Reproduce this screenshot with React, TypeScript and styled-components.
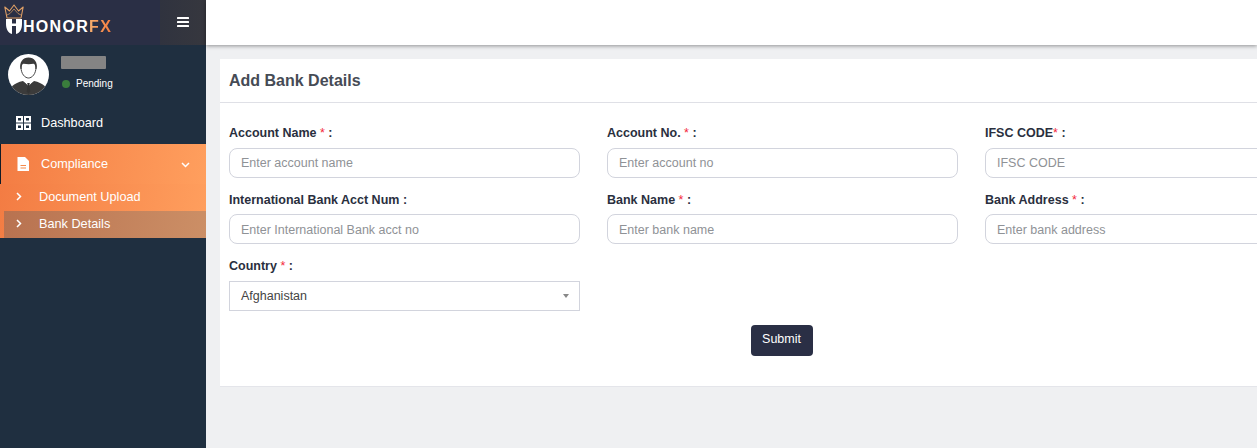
import React from "react";
import styled, { createGlobalStyle } from "styled-components";

const GlobalStyle = createGlobalStyle`
    html, body {
        margin: 0;
        padding: 0;
        height: 448px;
        overflow: hidden;
        background: #eff0f2;
        font-family: "Liberation Sans", Arial, sans-serif;
    }
`

const Shell = styled.div`
    display: flex;
    width: 1257px;
    height: 448px;
    overflow: hidden;
`

const Sidebar = styled.aside`
    width: 206px;
    flex-shrink: 0;
    background: #1f2f40;
    display: flex;
    flex-direction: column;
    color: #fff;
`

const Brand = styled.div`
    height: 45px;
    display: flex;
`

const LogoArea = styled.div`
    width: 160px;
    background: #2a2f45;
    display: flex;
    align-items: flex-start;
    padding-left: 4px;
    box-sizing: border-box;
`

const LogoMark = styled.svg`
    width: 20px;
    height: 32px;
    margin-top: 4px;
    flex-shrink: 0;
`

const ToggleArea = styled.div`
    width: 46px;
    background: linear-gradient(90deg, #30333f 0%, #36373e 100%);
    display: flex;
    align-items: center;
    justify-content: center;
    padding-bottom: 2px;
    box-sizing: border-box;
`

const LogoText = styled.span`
    margin: 16px 0 0 -1px;
    font-size: 16px;
    line-height: 22px;
    font-weight: 700;
    letter-spacing: 1.3px;
    color: #fff;
`

const LogoAccent = styled.span`
    background: linear-gradient(90deg, #f7b070 0%, #f57a3c 100%);
    -webkit-background-clip: text;
    background-clip: text;
    color: transparent;
`

const UserBlock = styled.div`
    height: 57px;
    display: flex;
    padding: 9px 0 0 8px;
    box-sizing: border-box;
`

const AvatarImage = styled.svg`
    width: 41px;
    height: 41px;
    flex-shrink: 0;
`

const UserInfo = styled.div`
    margin-left: 12px;
    padding-top: 2px;
    display: flex;
    flex-direction: column;
`

const NameMask = styled.div`
    width: 45px;
    height: 13px;
    background: #848484;
    border-radius: 1px;
`

const Status = styled.div`
    display: flex;
    align-items: center;
    margin-top: 8px;
    margin-left: 1px;
    font-size: 10px;
    line-height: 14px;
`

const StatusDot = styled.span`
    width: 8px;
    height: 8px;
    border-radius: 50%;
    background: #3a7d3c;
    margin-right: 6px;
`

const NavItem = styled.div`
    height: 42px;
    display: flex;
    align-items: center;
    padding-left: 16px;
    box-sizing: border-box;
    font-size: 12.7px;
`

const NavIcon = styled.svg`
    width: 16px;
    height: 16px;
    margin-right: 9px;
    flex-shrink: 0;
`

const ActiveGroup = styled.div`
    display: flex;
    flex-direction: column;
`

const ActiveItem = styled.div`
    height: 40px;
    display: flex;
    align-items: center;
    padding: 0 16px 0 15px;
    font-size: 12.7px;
    background: linear-gradient(100deg, #f37c43 0%, #ff9f5e 100%);
    border-left: 1px solid #111b26;
    box-sizing: border-box;
`

const Chevron = styled.svg`
    width: 9px;
    height: 9px;
    margin-left: auto;
`

const SubList = styled.div`
    background: linear-gradient(100deg, #f37c43 0%, #ff9f5e 100%);
    display: flex;
    flex-direction: column;
`

const SubItem = styled.div<{ $active?: boolean }>`
    height: 27px;
    box-sizing: border-box;
    display: flex;
    align-items: center;
    font-size: 12.7px;
    padding-bottom: 2px;
    padding-left: ${props => props.$active ? "11px" : "15px"};
    margin-left: ${props => props.$active ? "4px" : "0"};
    background: ${props => props.$active ? "linear-gradient(100deg, #b87250 0%, #cc8f66 100%)" : "transparent"};
`

const SubArrow = styled.svg`
    width: 8px;
    height: 9px;
    margin-right: 16px;
`

const Main = styled.main`
    flex: 1;
    min-width: 0;
    display: flex;
    flex-direction: column;
`

const TopBar = styled.header`
    height: 45px;
    flex-shrink: 0;
    background: #fff;
    box-shadow: 0 1px 4px rgba(0,0,0,.4);
`

const Card = styled.section`
    margin: 14px 0 0 14px;
    width: 1200px;
    height: 328px;
    flex-shrink: 0;
    background: #fff;
    border-bottom: 1px solid #e4e5ea;
    box-sizing: border-box;
`

const CardTitle = styled.h3`
    margin: 0;
    height: 43px;
    padding-left: 9px;
    display: flex;
    align-items: center;
    font-size: 16px;
    font-weight: 700;
    color: #464b55;
    border-bottom: 1px solid #dfe0e6;
`

const Form = styled.form`
    padding: 22px 9px 0;
    display: grid;
    grid-template-columns: repeat(3, 351px);
    column-gap: 27px;
`

const Field = styled.div`
    height: 66.5px;
    display: flex;
    flex-direction: column;
`

const Label = styled.label`
    font-size: 12.5px;
    line-height: 16px;
    font-weight: 700;
    color: #2a2f3e;
    margin-bottom: 6.9px;
`

const Star = styled.span`
    color: #f4283c;
    font-weight: 400;
`

const Input = styled.input`
    height: 30px;
    box-sizing: border-box;
    border: 1px solid #d2d4dd;
    border-radius: 8px;
    padding: .4px 11px 0;
    font: 12.5px "Liberation Sans", Arial, sans-serif;
    color: #333;
    outline: none;
    background: #fff;

    &::placeholder {
        color: #8f9296;
        opacity: 1;
    }
`

const SelectBox = styled.div`
    height: 30px;
    box-sizing: border-box;
    border: 1px solid #d2d4dd;
    padding: 0 11px;
    display: flex;
    align-items: center;
    font-size: 12.5px;
    color: #444;
`

const Caret = styled.span`
    margin-left: auto;
    margin-right: -1px;
    border-left: 3px solid transparent;
    border-right: 3px solid transparent;
    border-top: 4px solid #888;
`

const Actions = styled.div`
    display: flex;
    width: 1105px;
    justify-content: center;
    margin-left: 9px;
`

const SubmitButton = styled.button`
    width: 62px;
    height: 31px;
    border: none;
    border-radius: 4px;
    background: #2a2f45;
    color: #fff;
    font: 12.5px "Liberation Sans", Arial, sans-serif;
    padding: 0 0 3px;
`

const fields = [
    { label: "Account Name", star: " * ", placeholder: "Enter account name" },
    { label: "Account No.", star: " * ", placeholder: "Enter account no" },
    { label: "IFSC CODE", star: "* ", placeholder: "IFSC CODE" },
    { label: "International Bank Acct Num", star: " ", placeholder: "Enter International Bank acct no", plain: true },
    { label: "Bank Name", star: " * ", placeholder: "Enter bank name" },
    { label: "Bank Address", star: " * ", placeholder: "Enter bank address" },
]

const Logo = () => (
    <LogoMark viewBox="0 0 20 32">
        <path d="M3 14L.8 3l4.700 4L10 1l4.500 6 4.700-4L17 14z" fill="none" stroke="#e0a066" strokeWidth="1.1" strokeLinejoin="round" />
        <path d="M3 11l3-1.500L10 5l4 4.500 3 1.500" fill="none" stroke="#e0a066" strokeWidth=".7" />
        <path d="M2 15h6v15C4 29 2 25 2 20zM18 15h-6v15c4-1 6-5 6-10z" fill="#fff" />
        <path d="M8 19.500h4v2.500H8z" fill="#fff" />
    </LogoMark>
)

const Avatar = () => (
    <AvatarImage viewBox="0 0 41 41">
        <clipPath id="avatarClip"><circle cx="20.5" cy="20.5" r="20.5" /></clipPath>
        <circle cx="20.5" cy="20.5" r="20.5" fill="#fff" />
        <g clipPath="url(#avatarClip)">
            <path d="M1 41c0-8 5-12 14-14l5.500 4 5.500-4c9 2 14 6 14 14z" fill="#3b3b3b" />
            <path d="M15.500 27l5 5 5-5-1.500-3h-7z" fill="#fff" />
            <path d="M19.200 29h2.600l-.5 2.500 1 6-1.800 2-1.800-2 1-6z" fill="#333" />
            <path d="M13 13c0 7 4 11 7.500 11S28 20 28 13c0-2-.5-3-1.500-4h-12C13.500 10 13 11 13 13z" fill="#fff" stroke="#333" strokeWidth=".9" />
            <path d="M12.500 15c-1.500-7 2.500-11.500 8-11.500 5.500 0 9.500 4.500 8 11.500h-1c0-3-.5-4.500-2-5.500-3 1-6.500 1-10 0-1.500 1-2 2.500-2 5.500z" fill="#3b3b3b" />
        </g>
    </AvatarImage>
)

export default function App() {
    return (
        <Shell>
            <GlobalStyle />
            <Sidebar>
                <Brand>
                    <LogoArea>
                        <Logo />
                        <LogoText>HONOR<LogoAccent>FX</LogoAccent></LogoText>
                    </LogoArea>
                    <ToggleArea>
                        <svg width="12" height="10" viewBox="0 0 12 10" fill="#fff">
                            <rect width="12" height="2" rx=".5" />
                            <rect y="4" width="12" height="2" rx=".5" />
                            <rect y="8" width="12" height="2" rx=".5" />
                        </svg>
                    </ToggleArea>
                </Brand>
                <UserBlock>
                    <Avatar />
                    <UserInfo>
                        <NameMask />
                        <Status><StatusDot />Pending</Status>
                    </UserInfo>
                </UserBlock>
                <NavItem>
                    <NavIcon viewBox="0 0 16 16" fill="none" stroke="#fff" strokeWidth="2">
                        <rect x="1" y="2" width="5" height="4.500" />
                        <rect x="9" y="2" width="5" height="4.500" />
                        <rect x="1" y="9.500" width="5" height="4.500" />
                        <rect x="9" y="9.500" width="5" height="4.500" />
                    </NavIcon>
                    Dashboard
                </NavItem>
                <ActiveGroup>
                    <ActiveItem>
                        <NavIcon viewBox="0 0 16 16">
                            <path d="M1.500 1H9l4 4v10H1.500z" fill="#fff" />
                            <path d="M4.500 9.500h5.500M4.500 12h5.500" stroke="#f58a4b" strokeWidth="1.2" />
                        </NavIcon>
                        Compliance
                        <Chevron viewBox="0 0 9 9" fill="none" stroke="#fff" strokeWidth="1.5">
                            <path d="M1 3l3.500 3.500L8 3" />
                        </Chevron>
                    </ActiveItem>
                    <SubList>
                        <SubItem>
                            <SubArrow viewBox="0 0 8 9" fill="none" stroke="#fff" strokeWidth="1.5"><path d="M2 1l3.500 3.500L2 8" /></SubArrow>
                            Document Upload
                        </SubItem>
                        <SubItem $active>
                            <SubArrow viewBox="0 0 8 9" fill="none" stroke="#fff" strokeWidth="1.5"><path d="M2 1l3.500 3.500L2 8" /></SubArrow>
                            Bank Details
                        </SubItem>
                    </SubList>
                </ActiveGroup>
            </Sidebar>
            <Main>
                <TopBar />
                <Card>
                    <CardTitle>Add Bank Details</CardTitle>
                    <Form>
                        {fields.map(field => (
                            <Field key={field.label}>
                                <Label>{field.label}{field.plain ? " " : <Star>{field.star}</Star>}:</Label>
                                <Input placeholder={field.placeholder} />
                            </Field>
                        ))}
                        <Field>
                            <Label>Country <Star>* </Star>:</Label>
                            <SelectBox>Afghanistan<Caret /></SelectBox>
                        </Field>
                    </Form>
                    <Actions>
                        <SubmitButton type="button">Submit</SubmitButton>
                    </Actions>
                </Card>
            </Main>
        </Shell>
    )
}
